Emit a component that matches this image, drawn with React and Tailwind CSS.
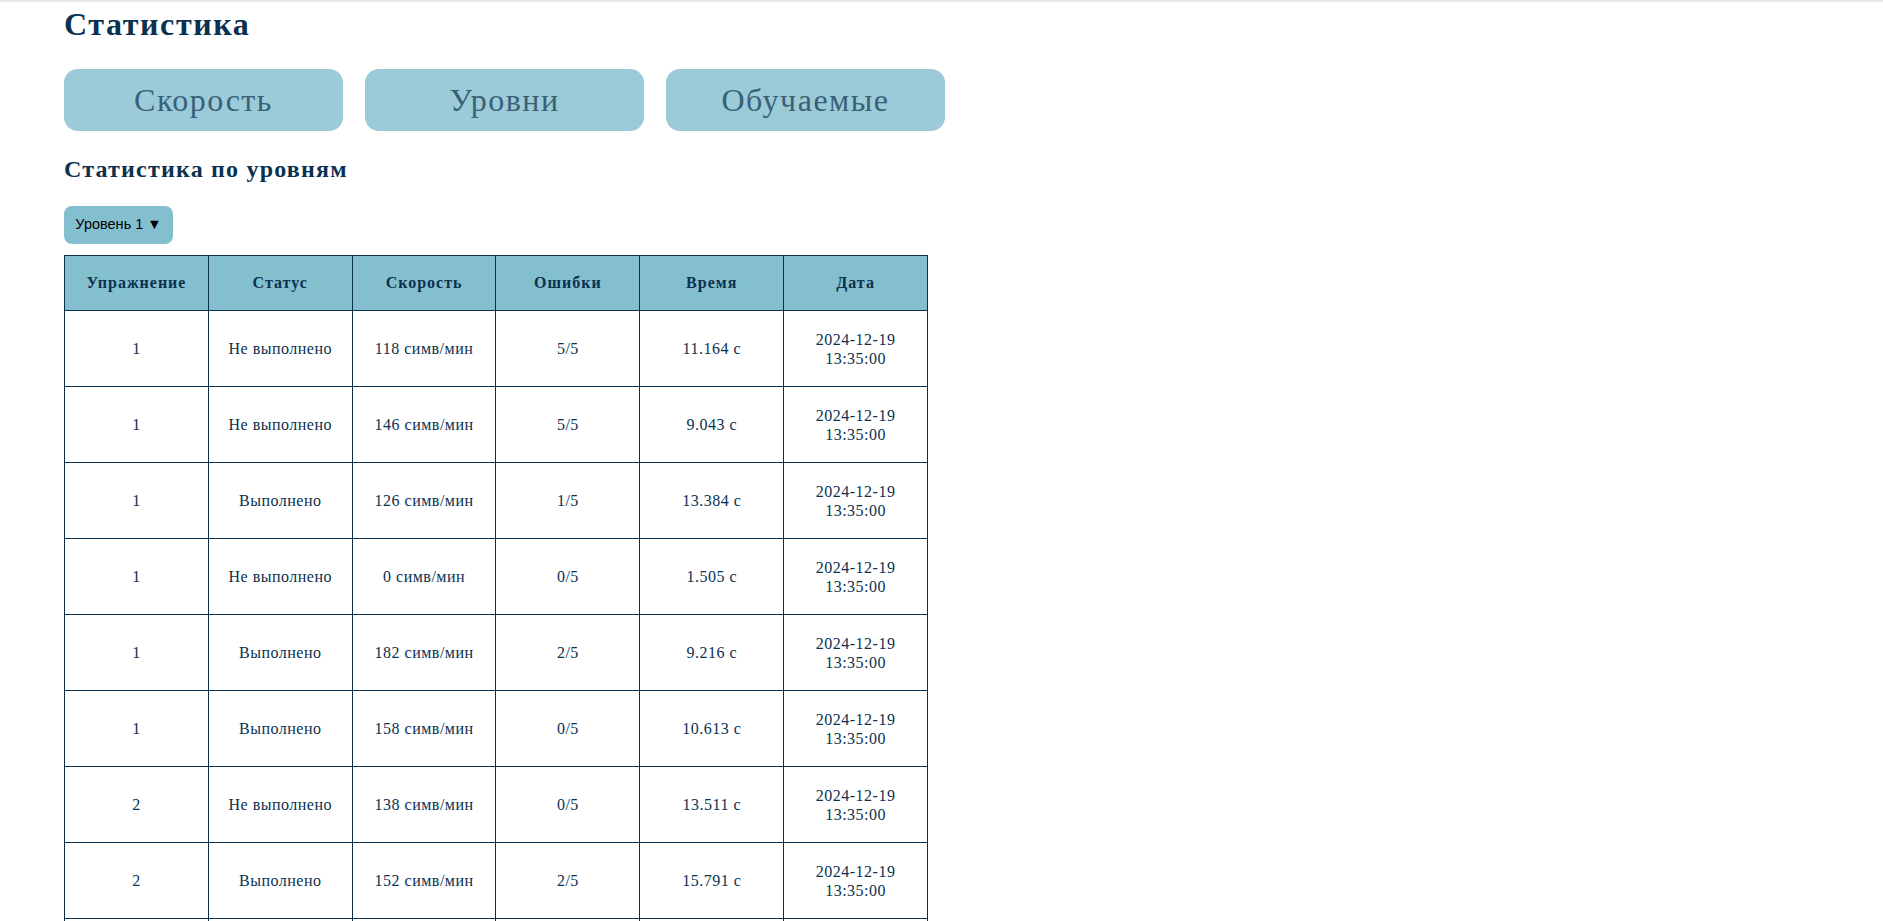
import React from "react";

const tabs = ["Скорость", "Уровни", "Обучаемые"];

const columns = ["Упражнение", "Статус", "Скорость", "Ошибки", "Время", "Дата"];

const rows = [
  { ex: 1, status: "Не выполнено", speed: 118, errors: "5/5", time: "11.164" },
  { ex: 1, status: "Не выполнено", speed: 146, errors: "5/5", time: "9.043" },
  { ex: 1, status: "Выполнено", speed: 126, errors: "1/5", time: "13.384" },
  { ex: 1, status: "Не выполнено", speed: 0, errors: "0/5", time: "1.505" },
  { ex: 1, status: "Выполнено", speed: 182, errors: "2/5", time: "9.216" },
  { ex: 1, status: "Выполнено", speed: 158, errors: "0/5", time: "10.613" },
  { ex: 2, status: "Не выполнено", speed: 138, errors: "0/5", time: "13.511" },
  { ex: 2, status: "Выполнено", speed: 152, errors: "2/5", time: "15.791" },
  { ex: 2, status: "Выполнено", speed: 164, errors: "1/5", time: "12.402" },
  { ex: 3, status: "Не выполнено", speed: 97, errors: "4/5", time: "18.230" },
];

export default function App() {
  return (
    <div className="min-h-screen bg-white font-['Liberation_Serif','Times_New_Roman',serif] text-[#0b3150]">
      <div className="h-[2px] bg-[#e8e8e8]" />
      <div className="pl-16 pb-10">
        <h1 className="pt-[4px] text-[32px] font-bold leading-[37px] tracking-[1.6px]">Статистика</h1>

        <div className="mt-[26px] flex gap-[22px]">
          {tabs.map((tab) => (
            <button
              key={tab}
              className="h-[62px] w-[279px] rounded-[14px] bg-[#9bcbd8] text-[32px] leading-none tracking-[1.5px] text-[#3a6077]"
            >
              {tab}
            </button>
          ))}
        </div>

        <h2 className="mt-[24px] text-[24px] font-bold leading-[28px] tracking-[1.2px]">Статистика по уровням</h2>

        <button className="mt-[23px] flex h-[38px] w-[109px] items-center justify-center rounded-[8px] bg-[#84bfcf] font-['Liberation_Sans',Arial,sans-serif] text-[14.5px] text-black">
          Уровень 1 ▼
        </button>

        <table className="mt-[11px] w-[864px] table-fixed border-collapse border border-[#0b3150] text-center text-[16px] tracking-[0.5px]">
          <thead>
            <tr className="h-[55px] bg-[#84bfce]">
              {columns.map((c) => (
                <th key={c} className="border border-[#0b3150] p-0 font-bold tracking-[1px]">
                  {c}
                </th>
              ))}
            </tr>
          </thead>
          <tbody>
            {rows.map((r, i) => (
              <tr key={i} className="h-[76px]">
                <td className="border border-[#0b3150] p-0">{r.ex}</td>
                <td className="border border-[#0b3150] p-0">{r.status}</td>
                <td className="border border-[#0b3150] p-0">{r.speed} симв/мин</td>
                <td className="border border-[#0b3150] p-0">{r.errors}</td>
                <td className="border border-[#0b3150] p-0">{r.time} с</td>
                <td className="border border-[#0b3150] px-2 py-0 leading-[19px]">
                  2024-12-19
                  <br />
                  13:35:00
                </td>
              </tr>
            ))}
          </tbody>
        </table>
      </div>
    </div>
  );
}
